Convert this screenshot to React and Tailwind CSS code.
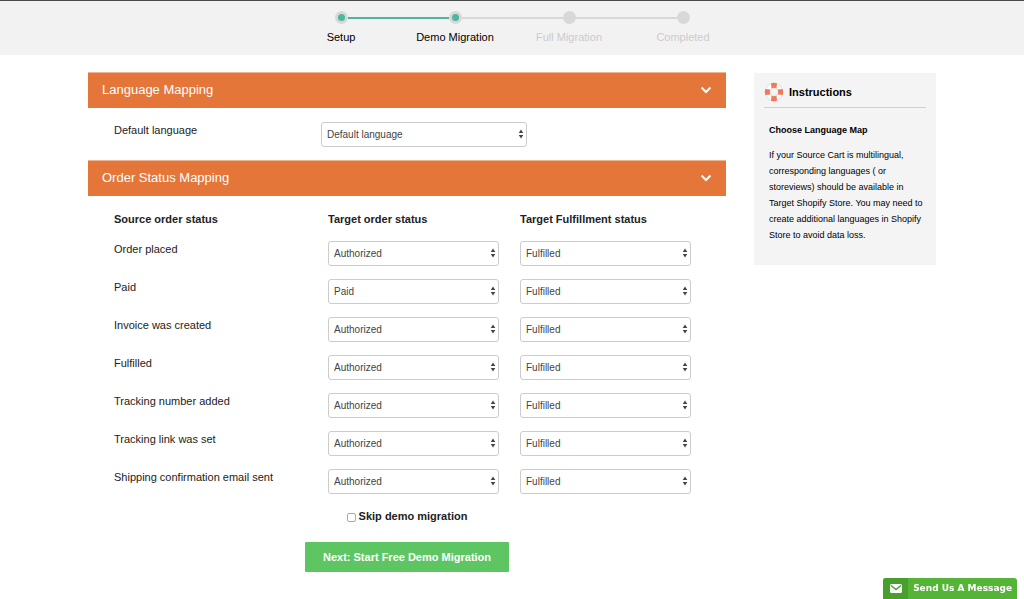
import React, { useState } from "react";

const STEPS = [
  { label: "Setup", done: true },
  { label: "Demo Migration", done: true },
  { label: "Full Migration", done: false },
  { label: "Completed", done: false },
];

const PAYMENT_STATUSES = ["Authorized", "Paid", "Pending", "Refunded", "Voided"];
const FULFILLMENT_STATUSES = ["Fulfilled", "Unfulfilled", "Partial"];

const ORDER_STATUSES = [
  { id: "placed", name: "Order placed", target: "Authorized" },
  { id: "paid", name: "Paid", target: "Paid" },
  { id: "invoice", name: "Invoice was created", target: "Authorized" },
  { id: "fulfilled", name: "Fulfilled", target: "Authorized" },
  { id: "tracking-number", name: "Tracking number added", target: "Authorized" },
  { id: "tracking-link", name: "Tracking link was set", target: "Authorized" },
  { id: "shipping-email", name: "Shipping confirmation email sent", target: "Authorized" },
];

function Stepper() {
  const lineColor = (on) => (on ? "bg-[#4db6a0]" : "bg-[#d8d8d8]");

  return (
    <header className="border-t border-[#4a4a4a] bg-[#f2f2f2] pt-[10px] pb-[10px]">
      <ol className="mx-auto grid max-w-[456px] grid-cols-4">
        {STEPS.map((step, i) => {
          const next = STEPS[i + 1];
          return (
            <li key={step.label} className="flex flex-col items-center">
              <div className="flex w-full items-center">
                <span className={`h-[2px] flex-1 ${i === 0 ? "" : lineColor(step.done)}`} />
                <span className="flex size-[13px] items-center justify-center rounded-full bg-[#d8d8d8]">
                  {step.done && <span className="size-[7px] rounded-full bg-[#4db6a0]" />}
                </span>
                <span className={`h-[2px] flex-1 ${next ? lineColor(next.done) : ""}`} />
              </div>
              <span className={`mt-[5px] text-[11px] leading-4 whitespace-nowrap ${step.done ? "text-black" : "text-[#cccccc]"}`}>
                {step.label}
              </span>
            </li>
          );
        })}
      </ol>
    </header>
  );
}

function SectionHeader({ title, open, onToggle }) {
  return (
    <h2>
      <button
        type="button"
        aria-expanded={open}
        onClick={onToggle}
        className="flex h-[36px] w-full items-center justify-between border-t border-[#efb592] bg-[#e4763a] px-[14px] pb-[2px] text-[13px] text-white"
      >
        {title}
        <svg viewBox="0 0 12 8" className="h-2 w-3" fill="none" stroke="currentColor" strokeWidth="2">
          <path d="M1.5 1.5 6 6l4.500-4.500" />
        </svg>
      </button>
    </h2>
  );
}

function Select({ options, ...props }) {
  return (
    <div className="relative">
      <select
        {...props}
        className="block h-[25px] w-full appearance-none rounded-[3px] border border-[#cccccc] bg-white pr-4 pl-[5px] text-[10px] text-[#444444]"
      >
        {options.map((o) => (
          <option key={o}>{o}</option>
        ))}
      </select>
      <svg viewBox="0 0 6 10" className="pointer-events-none absolute top-[7px] right-[3px] h-[10px] w-[6px]" fill="#444444">
        <path d="M3 0.500 5.300 4H0.700zM3 9.500 0.700 6h4.600z" />
      </svg>
    </div>
  );
}

function LifeRing() {
  return (
    <svg viewBox="0 0 20 20" className="size-[20px]" fill="none">
      <circle cx="10" cy="10" r="6.500" stroke="#ffffff" strokeWidth="4.500" />
      <circle cx="10" cy="10" r="8.800" stroke="#d2d2d2" strokeWidth="0.700" />
      <circle cx="10" cy="10" r="4.200" stroke="#d2d2d2" strokeWidth="0.700" />
      <path
        fill="#f0795b"
        d="M7 1.300q3-1 6 0L12.500 6.200q-2.500-.8-5 0zM7 18.700q3 1 6 0L12.500 13.800q-2.500 .8-5 0zM1.300 7q-1 3 0 6L6.200 12.500q-.8-2.500 0-5zM18.700 7q1 3 0 6L13.800 12.500q.8-2.500 0-5z"
      />
    </svg>
  );
}

function Instructions() {
  return (
    <aside className="mt-px self-start bg-[#f4f4f4] px-[10px] pt-[9px] pb-[22px] text-black">
      <h2 className="flex items-center gap-[5px] border-b border-[#d0d0d0] pb-[5px] text-[11px] font-bold">
        <LifeRing />
        Instructions
      </h2>
      <div className="pt-[14px] pl-[5px] text-[9px] leading-4">
        <h3 className="font-bold">Choose Language Map</h3>
        <p className="mt-[9px]">
          If your Source Cart is multilingual, corresponding languages ( or storeviews) should be
          available in Target Shopify Store. You may need to create additional languages in Shopify
          Store to avoid data loss.
        </p>
      </div>
    </aside>
  );
}

export default function App() {
  const [open, setOpen] = useState({ language: true, orders: true });
  const toggle = (key) => setOpen((prev) => ({ ...prev, [key]: !prev[key] }));

  return (
    <div className="min-h-screen bg-white font-['Liberation_Sans',Arial,sans-serif] text-[#222222]">
      <Stepper />

      <div className="mx-auto grid max-w-[848px] grid-cols-[minmax(0,1fr)_182px] gap-7 pt-[17px]">
        <main>
          {/* Language */}
          <SectionHeader title="Language Mapping" open={open.language} onToggle={() => toggle("language")} />
          {open.language && (
            <div className="flex items-start pt-[14px] pb-[13px] pl-[26px]">
              <label htmlFor="default-language" className="w-[207px] text-[11px] leading-4">
                Default language
              </label>
              <div className="w-[206px]">
                <Select id="default-language" options={["Default language"]} />
              </div>
            </div>
          )}

          {/* Order statuses */}
          <SectionHeader title="Order Status Mapping" open={open.orders} onToggle={() => toggle("orders")} />
          {open.orders && (
            <div className="pr-[35px] pl-[26px]">
              <table className="w-full table-fixed text-left text-[11px] leading-4">
                <thead>
                  <tr className="h-[45px]">
                    <th className="w-[214px] font-bold">Source order status</th>
                    <th className="font-bold">Target order status</th>
                    <th className="w-[171px] font-bold">Target Fulfillment status</th>
                  </tr>
                </thead>
                <tbody>
                  {ORDER_STATUSES.map((s) => (
                    <tr key={s.id} className="h-[38px] align-top">
                      <th scope="row" className="font-normal">{s.name}</th>
                      <td className="pr-[21px]">
                        <Select
                          aria-label={`Target order status for ${s.name}`}
                          defaultValue={s.target}
                          options={PAYMENT_STATUSES}
                        />
                      </td>
                      <td>
                        <Select
                          aria-label={`Target fulfillment status for ${s.name}`}
                          defaultValue="Fulfilled"
                          options={FULFILLMENT_STATUSES}
                        />
                      </td>
                    </tr>
                  ))}
                </tbody>
              </table>
            </div>
          )}

          <div className="flex flex-col items-center pt-px">
            <label className="flex items-center gap-[3px] text-[11px] leading-4 font-bold">
              <input
                type="checkbox"
                className="mt-[2px] size-[9px] appearance-none rounded-[2px] border border-[#a8a8a8] bg-white checked:bg-[#4db6a0]"
              />
              Skip demo migration
            </label>
            <button
              type="button"
              className="mt-[18px] h-[30px] rounded-[1px] bg-[#5ec563] px-[18px] text-[11px] font-bold text-white"
            >
              Next: Start Free Demo Migration
            </button>
          </div>
        </main>

        <Instructions />
      </div>

      {/* Chat launcher */}
      <button
        type="button"
        className="fixed right-[7px] bottom-0 flex h-[21px] items-stretch overflow-hidden rounded-t-[3px] bg-[#54b435] font-['DejaVu_Sans',Verdana,sans-serif] text-[9px] font-bold text-white"
      >
        <span className="flex w-[25px] items-center justify-center bg-[#47a02c]">
          <svg viewBox="0 0 12 9" className="h-[9px] w-3">
            <rect width="12" height="9" rx="1.500" fill="#ffffff" />
            <path d="M1 1.500 6 5.500l5-4" fill="none" stroke="#47a02c" strokeWidth="1.400" />
          </svg>
        </span>
        <span className="flex items-center px-[5px]">Send Us A Message</span>
      </button>
    </div>
  );
}
